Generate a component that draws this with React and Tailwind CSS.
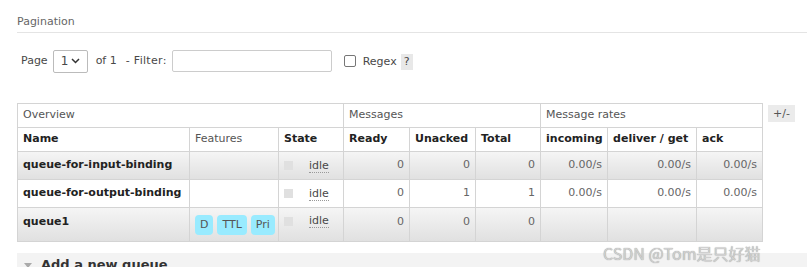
import React from 'react';

const rows = [
  { name: 'queue-for-input-binding', features: [], ready: 0, unacked: 0, total: 0, rates: ['0.00/s', '0.00/s', '0.00/s'], alt: true },
  { name: 'queue-for-output-binding', features: [], ready: 0, unacked: 1, total: 1, rates: ['0.00/s', '0.00/s', '0.00/s'], alt: false },
  { name: 'queue1', features: ['D', 'TTL', 'Pri'], ready: 0, unacked: 0, total: 0, rates: ['', '', ''], alt: true },
];

const widths = [172, 89, 65, 66, 66, 65, 67, 89, 66];

const App = () => {
  const td = 'border border-[#d4d4d4] px-[5px]';
  return (
    <div className="w-[807px] h-[267px] overflow-hidden bg-white text-[11px] text-[#484848] relative" style={{ fontFamily: '"DejaVu Sans", Verdana, sans-serif' }}>
      <div className="pt-[15px] pl-[17px]">
        <div className="text-[#666] leading-[14px] pb-[3px] border-b border-[#e4e4e4]">Pagination</div>

        <div className="flex items-center h-[24px] mt-[16px] pl-[4px]">
          <span>Page</span>
          <div className="ml-[5px] w-[35px] h-[23px] border border-[#bbb] rounded-[2px] flex items-center justify-between px-[7px]">
            <span className="text-[12px]">1</span>
            <svg width="9" height="6" viewBox="0 0 9 6"><path d="M1 1l3.5 3.5L8 1" stroke="#333" strokeWidth="1.5" fill="none" /></svg>
          </div>
          <span className="ml-[8px]">of 1</span>
          <span className="ml-[9px] tracking-[0.3px]">-&nbsp;Filter:</span>
          <div className="ml-[5px] w-[160px] h-[22px] border border-[#ccc] rounded-[2px]"></div>
          <div className="ml-[12px] w-[12px] h-[12px] border border-[#767676] rounded-[2px]"></div>
          <span className="ml-[7px] mt-[2px]">Regex</span>
          <span className="ml-[4px] mt-[2px] bg-[#e8e8e8] px-[3px] leading-[16px]">?</span>
        </div>

        <div className="flex items-start mt-[30px]">
          <table className="border-collapse table-fixed w-[745px]">
            <colgroup>
              {widths.map((w, i) => (
                <col key={i} style={{ width: w }} />
              ))}
            </colgroup>
            <thead>
              <tr className="h-[24px] text-[#555]">
                <th colSpan={3} className={`${td} text-left font-normal`}>Overview</th>
                <th colSpan={3} className={`${td} text-left font-normal`}>Messages</th>
                <th colSpan={3} className={`${td} text-left font-normal`}>Message rates</th>
              </tr>
              <tr className="h-[24px] text-[#222]">
                <th className={`${td} text-left`}>Name</th>
                <th className={`${td} text-left font-normal text-[#555]`}>Features</th>
                <th className={`${td} text-left`}>State</th>
                <th className={`${td} text-left`}>Ready</th>
                <th className={`${td} text-left`}>Unacked</th>
                <th className={`${td} text-left`}>Total</th>
                <th className={`${td} text-left`}>incoming</th>
                <th className={`${td} text-left whitespace-nowrap`}>deliver / get</th>
                <th className={`${td} text-left`}>ack</th>
              </tr>
            </thead>
            <tbody>
              {rows.map((r, i) => {
                const top = r.features.length ? 'align-top pt-[6px]' : '';
                return (
                  <tr key={i} className={`${r.features.length ? 'h-[34px]' : 'h-[28px]'} ${r.alt ? 'bg-gradient-to-b from-[#f5f5f5] to-[#e0e0e0]' : 'bg-white'}`}>
                    <td className={`${td} font-bold text-[#222] whitespace-nowrap ${top}`}>{r.name}</td>
                    <td className={`${td}`}>
                      <div className="flex gap-[4px] pt-[1px]">
                        {r.features.map((f) => (
                          <span key={f} className="bg-[#99ebff] rounded-[4px] px-[5px] leading-[20px] text-[#555]">{f}</span>
                        ))}
                      </div>
                    </td>
                    <td className={`${td} ${top}`}>
                      <div className="flex items-center">
                        <span className="w-[9px] h-[9px] bg-[#e0e0e0]"></span>
                        <span className="ml-[16px] border-b border-dotted border-[#999] leading-[13px]">idle</span>
                      </div>
                    </td>
                    <td className={`${td} text-right text-[#666] ${top}`}>{r.ready}</td>
                    <td className={`${td} text-right text-[#666] ${top}`}>{r.unacked}</td>
                    <td className={`${td} text-right text-[#666] ${top}`}>{r.total}</td>
                    {r.rates.map((v, j) => (
                      <td key={j} className={`${td} text-right text-[#666]`}>{v}</td>
                    ))}
                  </tr>
                );
              })}
            </tbody>
          </table>
          <span className="ml-[5px] mt-[2px] bg-[#ebebeb] px-[5px] leading-[17px] text-[#555]">+/-</span>
        </div>

        <div className="mt-[11px] bg-[#f3f3f3] h-[30px] flex items-start pt-[2px] pl-[6px]">
          <svg width="10" height="8" viewBox="0 0 10 8" className="mt-[7px]"><path d="M1 1h8L5 6z" fill="#aaa" /></svg>
          <span className="ml-[8px] font-bold text-[13px] text-[#333]">Add a new queue</span>
        </div>
      </div>

      <div className="absolute left-[603px] top-[241px] text-[16px] text-[#d0d0d0]" style={{ fontFamily: '"Noto Sans CJK SC", sans-serif', textShadow: '0 0 1px #888' }}>
        CSDN @Tom是只好猫
      </div>
    </div>
  );
};

export default App;
